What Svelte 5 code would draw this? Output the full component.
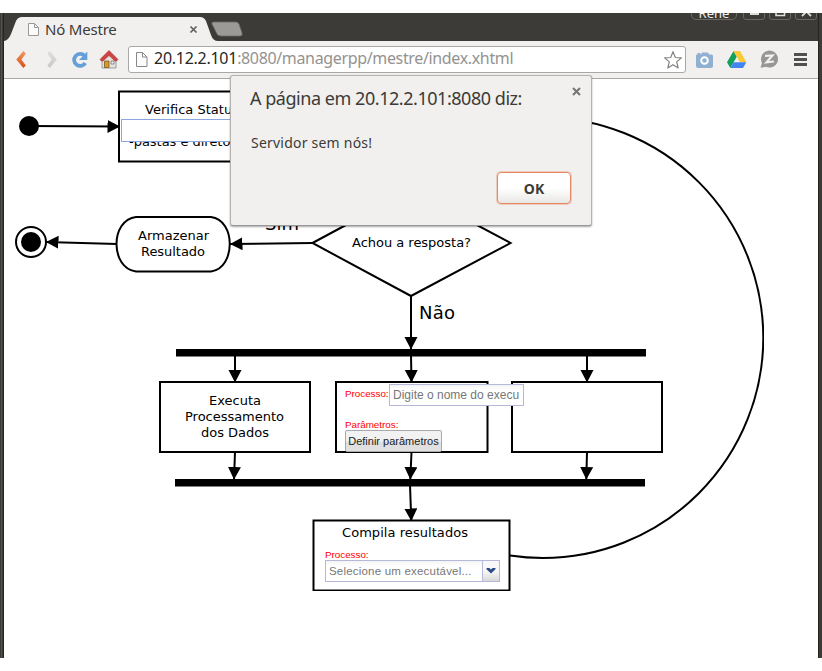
<script>
  const bars = [
    { x: 176, y: 349, w: 470, h: 7.5 },
    { x: 175, y: 479, w: 470, h: 7.5 }
  ];
  const boxes = [
    { x: 119, y: 91.5, w: 170, h: 70 },
    { x: 160, y: 382, w: 150, h: 70 },
    { x: 336, y: 382, w: 151.5, h: 70 },
    { x: 512, y: 382, w: 150, h: 70 },
    { x: 313.5, y: 520.5, w: 196, h: 70 }
  ];
  const arrows = [
    [29, 126, 120, 126.5],
    [313, 243, 230, 244],
    [117, 244, 46, 242],
    [411, 296, 411, 349.5],
    [235, 355, 235, 382.5],
    [411, 355, 411.5, 382.5],
    [587, 355, 587, 382.5],
    [235, 452, 234, 479.5],
    [411.5, 452, 410.3, 479.5],
    [587, 452, 586.3, 479.5],
    [410, 485, 411.3, 521]
  ];
  const labels = [
    { t: 'Verifica Status', x: 145, y: 114, w: 94 },
    { t: '-pastas e diretórios', x: 129, y: 146, w: 125 },
    { t: 'Armazenar', x: 138, y: 240, w: 71 },
    { t: 'Resultado', x: 141, y: 256, w: 64 },
    { t: 'Achou a resposta?', x: 352, y: 247, w: 119 },
    { t: 'Executa', x: 209, y: 405, w: 52 },
    { t: 'Processamento', x: 185, y: 421, w: 99 },
    { t: 'dos Dados', x: 201, y: 437, w: 68 },
    { t: 'Compila resultados', x: 342, y: 537, w: 126 },
    { t: 'Sim', x: 265, y: 230, w: 34, big: true },
    { t: 'Não', x: 419, y: 319, w: 36, big: true }
  ];
</script>

<main>
  <div class="window">
    <header class="strip">
      <svg class="tabshape" width="250" height="28" viewBox="0 13 250 28">
        <path d="M4 41 Q8 41 11 34 L16 21 Q18 17 22 17 H200 Q204 17 206 21 L211 35 Q213 41 218 41 Z" fill="#f1f0ee" />
        <path d="M214 22 H236 Q238 22 239 24 L242 33 Q243 36 240 36 H221 Q218 36 217 34 L212 24 Q211 22 214 22 Z" fill="#9b9a97" stroke="#6c6a66" stroke-width=".8" />
        <path d="M28.500 23.500 h6 l4 4 v8 h-10z M34.500 23.500 v4 h4" fill="#fbfbfb" stroke="#999" />
      </svg>
      <span class="tabtitle">Nó Mestre</span>
      <svg class="tabclose" width="9" height="9" viewBox="0 0 9 9"><path d="M1.500 1.500 7.500 7.500 M7.500 1.500 1.500 7.500" stroke="#62605d" stroke-width="1.700" /></svg>
      <div class="controls">
        <span class="user">René</span>
        <i><svg width="20" height="20"><path d="M6 11 h9 v3 h-9z" fill="#ddd" /></svg></i>
        <i><svg width="20" height="20"><path d="M6 6 h8.500 v8.500 h-8.500z" fill="none" stroke="#ddd" stroke-width="1.600" /></svg></i>
        <i><svg width="20" height="20"><path d="M6 6 l9 9 M15 6 l-9 9" stroke="#ddd" stroke-width="1.800" /></svg></i>
      </div>
    </header>

    <nav class="toolbar">
      <svg width="124" height="36" viewBox="4 42 124 36">
        <defs>
          <linearGradient id="or" x2="0" y2="1"><stop stop-color="#f39a63" /><stop offset="1" stop-color="#d84b12" /></linearGradient>
          <linearGradient id="gr" x2="0" y2="1"><stop stop-color="#e0dfdd" /><stop offset="1" stop-color="#c9c8c6" /></linearGradient>
        </defs>
        <path d="M23.300 51 L25.800 53.500 L21.400 59.500 L25.800 65.500 L23.300 68 L16.300 59.500 Z" fill="url(#or)" />
        <path d="M49.800 51 L47.300 53.500 L51.700 59.500 L47.300 65.500 L49.800 68 L56.800 59.500 Z" fill="url(#gr)" />
        <path d="M84.500 55.800 A6 6 0 1 0 85.300 63" fill="none" stroke="#659fd8" stroke-width="3.800" />
        <path d="M87.300 51.500 V60 H79 Z" fill="#659fd8" />
        <path d="M102 58 L109 52 L116 58 V68 H102Z" fill="#e5e3df" stroke="#888" stroke-width=".8" />
        <path d="M104.500 61 h4.500 v6.500 h-4.500z" fill="#d69a25" stroke="#7b5a20" stroke-width=".8" />
        <path d="M111 61 h3 v3 h-3z" fill="#eef" stroke="#777" stroke-width=".8" />
        <path d="M100 59.500 L109 50.500 L118 59.500 L116.500 61 H115 L109 55.500 L103 61 H101.500 Z" fill="#cf4545" stroke="#a83131" stroke-width=".6" />
      </svg>
      <div class="address">
        <svg width="25" height="25" viewBox="129 47 25 25"><path d="M136.500 52.500 h6 l4.500 4.500 v9.500 h-10.500z M142.500 52.500 v4.500 h4.500" fill="#fbfbfb" stroke="#888" /></svg>
        <span class="url"><b>20.12.2.101</b>:8080/managerpp/mestre/index.xhtml</span>
        <svg class="star" width="20" height="20" viewBox="0 0 20 20"><path d="M10 1.600 L12.300 7.500 L18.400 7.900 L13.700 11.900 L15.200 18 L10 14.700 L4.800 18 L6.300 11.900 L1.600 7.900 L7.700 7.500 Z" fill="#fff" stroke="#85827f" stroke-width="1.200" stroke-linejoin="round" /></svg>
      </div>
      <svg width="132" height="36" viewBox="686 42 132 36">
        <path d="M696 55.500 q0-1 1-1 h.5 v-1.500 h3 v1.500 h.5 l1-2 h6 l1 2 h2.500 q1.500 0 1.500 1.500 v10 q0 2-2 2 h-13 q-2 0-2-2z" fill="#90b0d2" />
        <circle cx="704.500" cy="60.500" r="3.300" fill="#90b0d2" stroke="#fff" stroke-width="2" />
        <path d="M733.500 51 L727 62.300 L730.300 68 L736.800 56.700Z" fill="#13a05b" />
        <path d="M733.500 51 H740 L746.300 62.300 H739.800Z" fill="#fcc934" />
        <path d="M733.600 62.300 H746.300 L743 68 H730.300Z" fill="#4384f5" />
        <path d="M760.500 67.800 L762 63 A8.500 8.500 0 1 1 766 66.800 Z" fill="#979694" />
        <path d="M765 55.800 L772.500 55.500 L766.500 62.300 L774 61.500" fill="none" stroke="#f1f0ee" stroke-width="2.200" />
        <path d="M794 54.500 h13 M794 59.500 h13 M794 64.500 h13" stroke="#50504f" stroke-width="2.800" />
      </svg>
    </nav>

    <section class="page">
      <svg class="diagram" width="814" height="579" viewBox="4 79 814 579">
        <defs>
          <marker id="head" markerUnits="userSpaceOnUse" markerWidth="14" markerHeight="14" refX="12.500" refY="6.500" orient="auto"><path d="M0 0 L12.500 6.500 L0 13Z" /></marker>
          <clipPath id="cut"><rect x="4" y="79" width="760" height="512" /></clipPath>
        </defs>
        <g clip-path="url(#cut)" fill="#fff" stroke="#000" stroke-width="2">
          <path d="M510 555.500 A220.500 220.500 0 0 0 543 558 A220.500 220.500 0 0 0 763.300 338 A220.500 220.500 0 0 0 543 117.500" fill="none" />
          {#each boxes as b}<rect x={b.x} y={b.y} width={b.w} height={b.h} />{/each}
          <path d="M136 217 H211 C236 220 236 268 211 271.500 H136 C110 268 110 220 136 217 Z" />
          <path d="M312.500 243 L411 190 L510.500 243 L411 296 Z" />
          <circle cx="31" cy="242" r="15" />
        </g>
        <circle cx="29" cy="126" r="10" />
        <circle cx="31" cy="242" r="10" />
        {#each arrows as [x1, y1, x2, y2]}<line {x1} {y1} {x2} {y2} stroke="#000" stroke-width="2" marker-end="url(#head)" />{/each}
        {#each bars as b}<rect x={b.x} y={b.y} width={b.w} height={b.h} />{/each}
        {#each labels as l}<text x={l.x} y={l.y} textLength={l.w} class:big={l.big}>{l.t}</text>{/each}
      </svg>

      <div class="field blank"></div>
      <span class="lab p1">Processo:</span>
      <div class="field name">Digite o nome do execu</div>
      <span class="lab p2">Parâmetros:</span>
      <button class="define">Definir parâmetros</button>
      <span class="lab p3">Processo:</span>
      <div class="field select">
        <span>Selecione um executável...</span>
        <i><svg width="10" height="8" viewBox="0 0 10 8"><path d="M0.500 1 H3.500 L5 2.500 L6.500 1 H9.500 V2.300 L5 6.500 L.500 2.300Z" fill="#2b4a86" /></svg></i>
      </div>
    </section>
  </div>

  <div class="dialog">
    <div class="head">
      <h1>A página em 20.12.2.101:8080 diz:</h1>
      <svg width="9" height="9" viewBox="0 0 9 9"><path d="M1 1 8 8 M8 1 1 8" stroke="#787572" stroke-width="2.100" /></svg>
    </div>
    <p>Servidor sem nós!</p>
    <button class="ok">OK</button>
  </div>
</main>

<style>
  main { position: relative; box-sizing: border-box; width: 822px; height: 671px; padding-top: 13px; background: #fff; overflow: hidden; font-family: "Noto Sans", "Open Sans", sans-serif; color: #3c3b37; }
  .window { box-sizing: border-box; width: 822px; height: 645px; padding: 0 4px; background: linear-gradient(90deg, #3c3b37 0 1px, #55534e 1px 2px, #3c3b37 2px 3px, #252421 3px 4px, #3c3b37 4px 818px, #252421 818px 819px, #3c3b37 819px); overflow: hidden; }
  .strip { position: relative; display: flex; align-items: center; height: 28px; overflow: hidden; }
  .tabshape { position: absolute; left: -4px; top: 0; }
  .tabtitle { position: relative; margin: 3px 0 0 41px; width: 144px; font-size: 15px; line-height: 22px; letter-spacing: -.2px; white-space: nowrap; }
  .tabclose { position: relative; margin-top: 4px; }
  .controls { display: flex; align-self: flex-start; gap: 4px; margin-left: auto; padding-right: 1px; margin-top: -13px; }
  .controls i, .user { box-sizing: border-box; height: 20px; border: 1px solid #6a6863; border-radius: 3px; }
  .controls i { width: 22px; overflow: hidden; }
  .controls i svg { display: block; }
  .user { width: 46px; margin-right: 2px; border-radius: 5px; font-size: 13px; line-height: 24px; text-align: center; color: #eee; }
  .toolbar { display: flex; align-items: center; height: 37px; background: #f1f0ee; border-bottom: 1px solid #aaa9a6; }
  .address { box-sizing: border-box; display: flex; align-items: center; width: 558px; height: 27px; border: 1px solid #aaa8a5; border-radius: 3px; background: #fff; }
  .url { flex: 1; padding-bottom: 2px; font-size: 16px; line-height: 23px; white-space: nowrap; color: #94928f; letter-spacing: -.35px; }
  .url b { font-weight: 400; color: #282725; letter-spacing: -.27px; }
  .star { margin-right: 2px; }
  .page { position: relative; height: 579px; background: #fff; }
  .diagram { display: block; }
  .diagram text { font: 13px "DejaVu Sans", sans-serif; }
  .diagram text.big { font-size: 18px; }
  .field, .lab, .define { position: absolute; box-sizing: border-box; font-family: "Liberation Sans", Arial, sans-serif; white-space: nowrap; }
  .lab { font-size: 9.8px; line-height: 12px; color: #f00; }
  .p1 { left: 341px; top: 309px; }
  .p2 { left: 341px; top: 340px; }
  .p3 { left: 321px; top: 470px; }
  .field { border: 1px solid #b5b8d8; background: linear-gradient(#f4f4f4, #fff 5px); color: #777; }
  .blank { left: 117px; top: 40px; width: 150px; height: 23px; border-color: #8aa8de; background: #fff; }
  .name { left: 385px; top: 305px; width: 135px; height: 22px; padding-left: 3px; font-size: 12px; line-height: 20px; }
  .define { left: 341px; top: 351px; width: 97px; height: 22px; padding: 0; border: 1px solid #aaa; border-radius: 2px; background: linear-gradient(#f2f2f2 50%, #dedede 55%, #e2e2e2); font-size: 11px; line-height: 20px; color: #222; }
  .select { display: flex; left: 321px; top: 481px; width: 175px; height: 22px; font-size: 11.5px; line-height: 20px; letter-spacing: .2px; }
  .select span { flex: 1; padding-left: 3px; }
  .select i { display: flex; width: 16px; align-items: center; justify-content: center; border-left: 1px solid #b5b8d8; background: linear-gradient(#f8f8f8 50%, #d8d8d8); }
  .dialog { position: absolute; left: 230px; top: 75px; box-sizing: border-box; display: flex; flex-direction: column; width: 362px; height: 151px; padding: 10px 10px 0 19px; border: 1px solid #b3b2af; border-bottom-color: #999; border-radius: 3px; background: #f1f0ee; box-shadow: 0 1px 2px rgba(0,0,0,.35); }
  .head { display: flex; justify-content: space-between; }
  .head svg { margin-top: 1px; }
  h1 { margin: -1px 0 1px; font-size: 18px; font-weight: 400; line-height: 26px; letter-spacing: -.46px; white-space: nowrap; }
  p { margin: 21px 0 0 1px; font-size: 14px; line-height: 20px; letter-spacing: .22px; }
  .ok { width: 74px; height: 32px; margin: 19px 10px 0 0; align-self: flex-end; border: 1px solid #e58762; border-radius: 4px; background: linear-gradient(#fff 50%, #e9e8e6); box-shadow: 0 0 0 1px rgba(235,150,110,.4); font: 700 14px "Noto Sans", sans-serif; color: #3c3b37; }
</style>
